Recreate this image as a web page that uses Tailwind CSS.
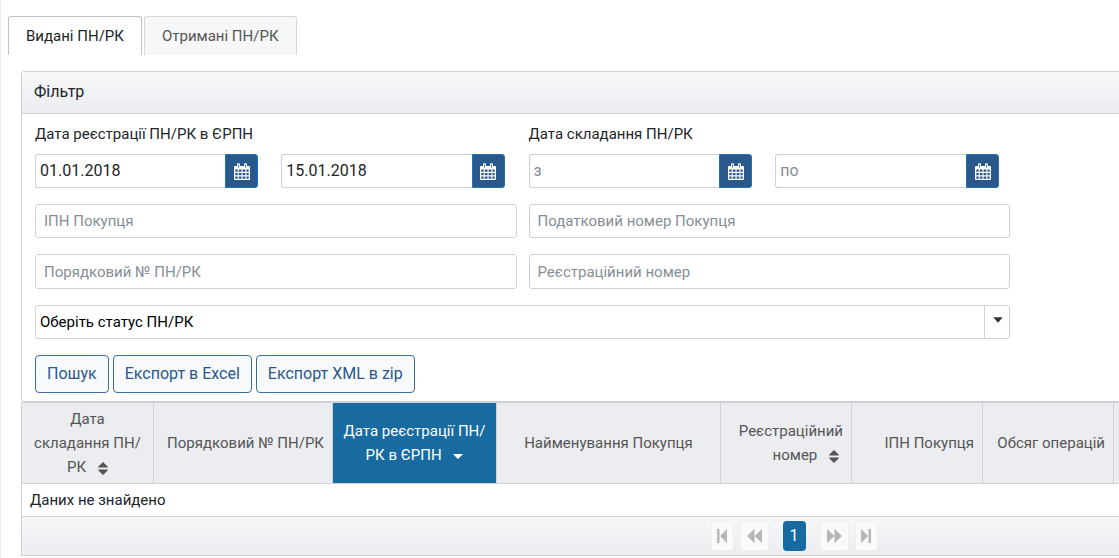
<!DOCTYPE html>
<html lang="uk">
<head>
<meta charset="utf-8">
<meta name="viewport" content="width=device-width, initial-scale=1">
<title>ПН/РК</title>
<script src="https://cdn.jsdelivr.net/npm/@tailwindcss/browser@4"></script>
</head>
<body class="overflow-x-hidden bg-white font-[Roboto,'Noto_Sans',sans-serif] text-[15px] leading-6 text-[#212529]">
<svg class="hidden" aria-hidden="true">
  <symbol id="calendar" viewBox="0 0 16 17">
    <path fill="currentColor" fill-rule="evenodd" d="M1 3h2V1.500a1.500 1.500 0 0 1 3 0V3h4V1.500a1.500 1.500 0 0 1 3 0V3h2a1 1 0 0 1 1 1v12a1 1 0 0 1-1 1H1a1 1 0 0 1-1-1V4a1 1 0 0 1 1-1zM1.300 6.500V8.800h2.400V6.500zM4.800 6.500V8.800h2.700V6.500zM8.600 6.500V8.800h2.700V6.500zM12.400 6.500V8.800h2.300V6.500zM1.300 9.900v2.400h2.400V9.900zM4.800 9.900v2.400h2.700V9.900zM8.600 9.900v2.400h2.700V9.900zM12.400 9.900v2.400h2.300V9.900zM1.300 13.400v2.300h2.400v-2.300zM4.800 13.400v2.300h2.700v-2.300zM8.600 13.400v2.300h2.700v-2.300zM12.400 13.400v2.300h2.300v-2.300zM4.100 1.400V4.400h.8V1.400zM11.100 1.400V4.400h.8V1.400z"/>
  </symbol>
  <symbol id="sort" viewBox="0 0 10 13">
    <path fill="currentColor" d="M5 0l4.600 4.600c.4.500.2 1-.4 1H.8c-.6 0-.8-.5-.4-1zM5 13l4.600-4.600c.4-.5.2-1-.4-1H.8c-.6 0-.8.5-.4 1z"/>
  </symbol>
</svg>
<main class="min-h-screen overflow-hidden border-l border-[#e9eaec] pt-4">
  <div role="tablist" class="flex gap-0.5 pl-[7px]">
    <button role="tab" aria-selected="true" class="h-[39px] rounded-t-[3px] border border-b-0 border-[#bfc3c7] bg-white px-[17px]">Видані ПН/РК</button>
    <button role="tab" aria-selected="false" class="h-[39px] rounded-t-[3px] border border-b-0 border-[#d5d8db] bg-[#f6f7f9] px-[17px] text-[#555]">Отримані ПН/РК</button>
  </div>
  <div class="mt-4 ml-5 min-w-[1546px]">
    <section class="rounded-[3px] border border-[#d0d2d5]">
      <h2 class="h-[42px] border-b border-[#d0d2d5] bg-linear-to-b from-[#f6f7f9] to-[#ebedf0] px-3 py-2 text-base">Фільтр</h2>
      <form class="max-w-[1001px] px-[13px] pt-2 pb-2">
        <div class="grid grid-cols-2 gap-x-3 gap-y-4">
          <fieldset>
            <legend class="mb-2">Дата реєстрації ПН/РК в ЄРПН</legend>
            <div class="grid grid-cols-2 gap-[23px] pr-3 text-base">
              <div class="flex h-[34px]">
                <input aria-label="Дата реєстрації з" value="01.01.2018" class="min-w-0 flex-1 rounded-l-[3px] border border-r-0 border-[#ced2d6] px-1">
                <button type="button" aria-label="Календар" class="flex w-[33px] items-center justify-center rounded-r-[3px] border border-[#1f74b0] bg-[#29588c] text-white"><svg class="h-[17px] w-4"><use href="#calendar"/></svg></button>
              </div>
              <div class="flex h-[34px]">
                <input aria-label="Дата реєстрації по" value="15.01.2018" class="min-w-0 flex-1 rounded-l-[3px] border border-r-0 border-[#ced2d6] px-1">
                <button type="button" aria-label="Календар" class="flex w-[33px] items-center justify-center rounded-r-[3px] border border-[#1f74b0] bg-[#29588c] text-white"><svg class="h-[17px] w-4"><use href="#calendar"/></svg></button>
              </div>
            </div>
          </fieldset>
          <fieldset>
            <legend class="mb-2">Дата складання ПН/РК</legend>
            <div class="grid grid-cols-2 gap-[23px] pr-[11px] text-base">
              <div class="flex h-[34px]">
                <input aria-label="Дата складання з" placeholder="з" class="min-w-0 flex-1 rounded-l-[3px] border border-r-0 border-[#ced2d6] px-1 placeholder:text-[#868e96]">
                <button type="button" aria-label="Календар" class="flex w-[33px] items-center justify-center rounded-r-[3px] border border-[#1f74b0] bg-[#29588c] text-white"><svg class="h-[17px] w-4"><use href="#calendar"/></svg></button>
              </div>
              <div class="flex h-[34px]">
                <input aria-label="Дата складання по" placeholder="по" class="min-w-0 flex-1 rounded-l-[3px] border border-r-0 border-[#ced2d6] px-1 placeholder:text-[#868e96]">
                <button type="button" aria-label="Календар" class="flex w-[33px] items-center justify-center rounded-r-[3px] border border-[#1f74b0] bg-[#29588c] text-white"><svg class="h-[17px] w-4"><use href="#calendar"/></svg></button>
              </div>
            </div>
          </fieldset>
          <input aria-label="ІПН Покупця" placeholder="ІПН Покупця" class="h-[34px] rounded-[3px] border border-[#ced2d6] px-2 placeholder:text-[#868e96]">
          <input aria-label="Податковий номер Покупця" placeholder="Податковий номер Покупця" class="h-[34px] rounded-[3px] border border-[#ced2d6] px-2 placeholder:text-[#868e96]">
          <input aria-label="Порядковий № ПН/РК" placeholder="Порядковий № ПН/РК" class="h-[35px] rounded-[3px] border border-[#ced2d6] px-2 placeholder:text-[#868e96]">
          <input aria-label="Реєстраційний номер" placeholder="Реєстраційний номер" class="h-[35px] rounded-[3px] border border-[#ced2d6] px-2 placeholder:text-[#868e96]">
          <div class="relative col-span-2">
            <select aria-label="Статус ПН/РК" class="block h-[34px] w-full appearance-none rounded-[3px] border border-[#ced2d6] bg-white pr-8 pl-1 text-black">
              <option>Оберіть статус ПН/РК</option>
            </select>
            <span class="pointer-events-none absolute inset-y-0 right-0 flex w-[26px] items-center justify-center border-l border-[#ced2d6] pb-1"><svg class="h-[6px] w-[10px]" viewBox="0 0 10 6"><path fill="#333" d="M.3.300h9.400L5 5.700z"/></svg></span>
          </div>
        </div>
        <div class="mt-4 flex gap-1 text-base">
          <button type="button" class="h-[38px] rounded border border-[#3a6e9f] bg-[#f8f9fa] px-[11px] text-[#29588c]">Пошук</button>
          <button type="button" class="h-[38px] rounded border border-[#3a6e9f] bg-[#f8f9fa] px-[11px] text-[#29588c]">Експорт в Excel</button>
          <button type="button" class="h-[38px] rounded border border-[#3a6e9f] bg-[#f8f9fa] px-[11px] text-[#29588c]">Експорт XML в zip</button>
        </div>
      </form>
    </section>
    <table class="w-full table-fixed border-collapse">
      <colgroup>
        <col class="w-[132px]"><col class="w-[179px]"><col class="w-[164px]"><col class="w-[224px]"><col class="w-[131px]"><col class="w-[131px]"><col class="w-[131px]"><col>
      </colgroup>
      <thead>
        <tr class="h-[81px] bg-[#ebedf0] text-[#555]">
          <th class="border border-[#d0d2d5] px-2 font-normal whitespace-nowrap">Дата<br>складання ПН/<br>РК <svg class="ml-2 inline h-[13px] w-[10px]"><use href="#sort"/></svg></th>
          <th class="border border-[#d0d2d5] px-2 text-right font-normal whitespace-nowrap">Порядковий № ПН/РК</th>
          <th class="border border-[#d0d2d5] bg-[#186ba0] px-2 font-normal whitespace-nowrap text-white">Дата реєстрації ПН/<br>РК в ЄРПН <svg class="ml-2 inline h-[5px] w-[10px]" viewBox="0 0 10 5"><path fill="currentColor" d="M0 0h10L5.700 4.600Q5 5.200 4.300 4.600z"/></svg></th>
          <th class="border border-[#d0d2d5] px-2 font-normal">Найменування Покупця</th>
          <th class="border border-[#d0d2d5] px-2 text-right font-normal">Реєстраційний номер <svg class="mr-1 ml-2 inline h-[13px] w-[10px]"><use href="#sort"/></svg></th>
          <th class="border border-[#d0d2d5] px-2 text-right font-normal">ІПН Покупця</th>
          <th class="border border-[#d0d2d5] px-2 text-right font-normal whitespace-nowrap">Обсяг операцій</th>
          <th class="border border-[#d0d2d5]"></th>
        </tr>
      </thead>
      <tbody>
        <tr class="h-[33px]"><td colspan="8" class="border border-[#d0d2d5] px-2">Даних не знайдено</td></tr>
      </tbody>
    </table>
    <nav aria-label="Сторінки" class="flex h-[39px] items-center justify-center border border-t-0 border-[#d0d2d5] bg-linear-to-b from-[#f6f7f9] to-[#ebedf0] text-base text-[#b4b7ba]">
      <button aria-label="Перша" class="flex h-[30px] w-[23px] items-center justify-center rounded-[3px] border border-[#eceef0] bg-[#f9fafb]"><svg class="h-[14px] w-[10px]" viewBox="0 0 10 14"><path fill="currentColor" d="M0 0h2.500v14H0zM10 0v14L3 7z"/></svg></button>
      <button aria-label="Попередня" class="ml-[6px] flex h-[30px] w-[29px] items-center justify-center rounded-[3px] border border-[#eceef0] bg-[#f9fafb]"><svg class="h-[14px] w-[15px]" viewBox="0 0 15 14"><path fill="currentColor" d="M7.500 0v14L0 7zM15 0v14L7.500 7z"/></svg></button>
      <button aria-current="page" class="mx-[14px] h-[30px] w-[23px] rounded bg-[#186ba0] text-white">1</button>
      <button aria-label="Наступна" class="mr-[6px] flex h-[30px] w-[29px] items-center justify-center rounded-[3px] border border-[#eceef0] bg-[#f9fafb]"><svg class="h-[14px] w-[15px]" viewBox="0 0 15 14"><path fill="currentColor" d="M0 0l7.500 7L0 14zM7.500 0l7.500 7-7.500 7z"/></svg></button>
      <button aria-label="Остання" class="flex h-[30px] w-[23px] items-center justify-center rounded-[3px] border border-[#eceef0] bg-[#f9fafb]"><svg class="h-[14px] w-[10px]" viewBox="0 0 10 14"><path fill="currentColor" d="M7.500 0H10v14H7.500zM0 0l7 7-7 7z"/></svg></button>
    </nav>
  </div>
</main>
</body>
</html>
